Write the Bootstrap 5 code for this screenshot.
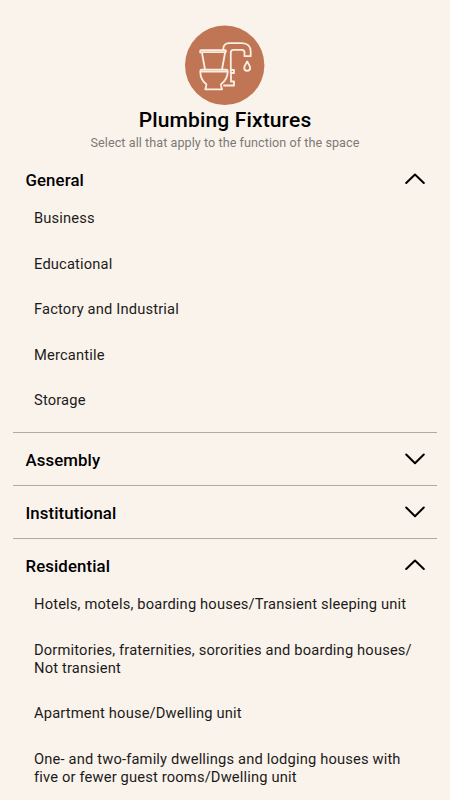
<!DOCTYPE html>
<html lang="en">
<head>
<meta charset="utf-8">
<meta name="viewport" content="width=device-width, initial-scale=1">
<title>Plumbing Fixtures</title>
<link href="https://cdn.jsdelivr.net/npm/bootstrap@5.3.0/dist/css/bootstrap.min.css" rel="stylesheet">
<style>
body { background: #faf3ec; color: #1c1b1a; font-family: Roboto, sans-serif; height: 800px; overflow: hidden; }
.page { padding: 25px 13px 0; }
.hero-icon { width: 80px; height: 80px; }
.title { font-size: 21px; font-weight: 500; line-height: 26px; margin-top: 2px; color: #000; letter-spacing: .15px; }
.hint { font-size: 12.6px; line-height: 18px; color: #7d7976; letter-spacing: .06px; margin-top: 1px; }
.groups { margin-top: 1px; }
.group { border-bottom: 1px solid #b0aaa6; }
.group-head { height: 52px; padding: 2px 12px 0 12.5px; color: #000; font-size: 16.8px; font-weight: 500; line-height: 20px; }
.group-head span { letter-spacing: .1px; }
.group-open .group-head { height: 42.25px; padding-top: 17px; align-items: flex-start !important; }
.chev { width: 20px; height: 12px; margin-top: -2px; }
.group-open .chev { margin-top: 3px; }
.options { padding: 0 0 9.25px 21px; }
.options li { padding: 13.75px 0; font-size: 14.7px; line-height: 18px; letter-spacing: .165px; white-space: nowrap; }
</style>
<script src="https://cdn.jsdelivr.net/npm/bootstrap@5.3.0/dist/js/bootstrap.bundle.min.js"></script>
</head>
<body>
<main class="page">
  <header class="d-flex flex-column align-items-center text-center">
    <svg class="hero-icon" viewBox="0 0 80 80" fill="none" stroke="#fbeee2" stroke-width="1.8" stroke-linecap="round" stroke-linejoin="round">
      <circle cx="39.7" cy="40.3" r="39.7" fill="#c07654" stroke="none"/>
      <path d="M15.2 27.6V26q0-.8.8-.8H40q1 0 1 1t-1 1H17"/>
      <path d="M17 28l3 16.500M40 28l-3 16.500"/>
      <path d="M16.500 44.700h25q1.200 0 1.200 2c0 6-2.500 9-6.200 12q-.8.8-.5 2l1 3.600H20.300l1-3.600q.3-1.200-.5-2c-3.700-3-5.500-6-5.500-12q0-2 1.200-2z"/>
      <path d="M16 46.500h26"/>
      <path d="M38.300 24.500V23.500c0-3 2.500-5.400 5.500-5.400H57c5.500 0 8.700 3.500 8.700 8.500v4.600h-6.200V27.500c0-1.700-.8-2.600-2.500-2.600H48.500c-1.700 0-2.700 1-2.700 2.700V45"/>
      <path d="M45.800 45h3.200v3h-3.200zM46 48v8.500h3V60.500H39"/>
      <path d="M62.200 36.500c-2 3.400-3 4.800-3 6.300a3 3 0 0 0 6 0c0-1.500-1-2.900-3-6.300z"/>
    </svg>
    <h1 class="title mb-0">Plumbing Fixtures</h1>
    <p class="hint mb-0">Select all that apply to the function of the space</p>
  </header>
  <div class="groups">
    <section class="group group-open">
      <div class="group-head d-flex justify-content-between align-items-center"><span>General</span>
        <svg class="chev" viewBox="0 0 20 12" fill="none" stroke="#000" stroke-width="2" stroke-linecap="round" stroke-linejoin="round"><path d="M1.200 10L10 1.500l8.800 8.500"/></svg></div>
      <ul class="options list-unstyled mb-0">
        <li>Business</li>
        <li>Educational</li>
        <li>Factory and Industrial</li>
        <li>Mercantile</li>
        <li>Storage</li>
      </ul>
    </section>
    <section class="group">
      <div class="group-head d-flex justify-content-between align-items-center"><span>Assembly</span>
        <svg class="chev" viewBox="0 0 20 12" fill="none" stroke="#000" stroke-width="2" stroke-linecap="round" stroke-linejoin="round"><path d="M1.200 1.500l8.800 8.700 8.800-8.700"/></svg></div>
    </section>
    <section class="group">
      <div class="group-head d-flex justify-content-between align-items-center"><span>Institutional</span>
        <svg class="chev" viewBox="0 0 20 12" fill="none" stroke="#000" stroke-width="2" stroke-linecap="round" stroke-linejoin="round"><path d="M1.200 1.500l8.800 8.700 8.800-8.700"/></svg></div>
    </section>
    <section class="group group-open">
      <div class="group-head d-flex justify-content-between align-items-center"><span>Residential</span>
        <svg class="chev" viewBox="0 0 20 12" fill="none" stroke="#000" stroke-width="2" stroke-linecap="round" stroke-linejoin="round"><path d="M1.200 10L10 1.500l8.800 8.500"/></svg></div>
      <ul class="options list-unstyled mb-0">
        <li>Hotels, motels, boarding houses/Transient sleeping unit</li>
        <li>Dormitories, fraternities, sororities and boarding houses/<br>Not transient</li>
        <li>Apartment house/Dwelling unit</li>
        <li>One- and two-family dwellings and lodging houses with<br>five or fewer guest rooms/Dwelling unit</li>
      </ul>
    </section>
  </div>
</main>
</body>
</html>
